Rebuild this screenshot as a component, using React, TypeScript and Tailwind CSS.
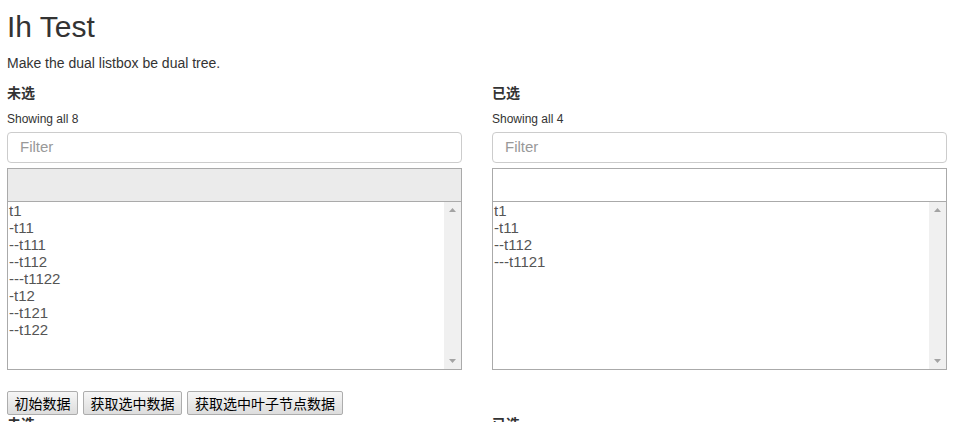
import React from "react";

const leftItems = ["t1", "-t11", "--t111", "--t112", "---t1122", "-t12", "--t121", "--t122"];
const rightItems = ["t1", "-t11", "--t112", "---t1121"];

function ScrollBar() {
  return (
    <div className="w-[17px] shrink-0 bg-[#f0f0f0] flex flex-col justify-between items-center py-[6px]">
      <svg width="7" height="4" viewBox="0 0 7 4">
        <path d="M0 4 L3.5 0 L7 4 Z" fill="#a3a3a3" />
      </svg>
      <svg width="7" height="4" viewBox="0 0 7 4">
        <path d="M0 0 L3.5 4 L7 0 Z" fill="#a3a3a3" />
      </svg>
    </div>
  );
}

function ListBox({
  title,
  count,
  items,
  gray,
}: {
  title: string;
  count: number;
  items: string[];
  gray: boolean;
}) {
  return (
    <div className="flex flex-col">
      <label className="block text-[14px] leading-[20px] font-bold text-[#333] mt-[10px]">{title}</label>
      <span className="block text-[12px] leading-[17px] text-[#333] mt-[8px]">Showing all {count}</span>
      <div className="mt-[4px] h-[31px] border border-[#ccc] rounded-[4px] flex items-center px-[12px] text-[15px] text-[#999]">
        Filter
      </div>
      <div
        className={
          gray
            ? "mt-[5px] h-[33px] border border-b-0 border-[#aaa] bg-[#ebebeb]"
            : "mt-[5px] h-[33px] border border-b-0 border-[#aaa] bg-white"
        }
      />
      <div className="h-[169px] border border-[#aaa] flex">
        <div className="flex-1 text-[15px] leading-[17px] text-[#555]">
          {items.map((it, i) => (
            <div key={i} className="pl-[1px]">
              {it}
            </div>
          ))}
        </div>
        <ScrollBar />
      </div>
    </div>
  );
}

function Btn({ children, w }: { children: React.ReactNode; w: string }) {
  return (
    <button
      className={
        "h-[24px] border border-[#adadad] rounded-[2px] bg-gradient-to-b from-[#f6f6f6] to-[#dddddd] text-[14px] text-black leading-none " +
        w
      }
    >
      {children}
    </button>
  );
}

export default function App() {
  return (
    <div
      className="pl-[7px] pr-[9px] bg-white min-h-[422px] overflow-hidden"
      style={{ fontFamily: '"Liberation Sans", Arial, "Noto Sans CJK SC", sans-serif' }}
    >
      <h1 className="text-[30px] leading-[33px] text-[#333] mt-[10px]">Ih Test</h1>
      <p className="text-[14px] leading-[20px] text-[#333] mt-[10px]">Make the dual listbox be dual tree.</p>
      <div className="grid grid-cols-2 gap-[30px]">
        <ListBox title="未选" count={8} items={leftItems} gray={true} />
        <ListBox title="已选" count={4} items={rightItems} gray={false} />
      </div>
      <div className="flex gap-[5px] mt-[21px]" style={{ fontFamily: '"Noto Sans CJK SC", sans-serif' }}>
        <Btn w="w-[71px]">初始数据</Btn>
        <Btn w="w-[99px]">获取选中数据</Btn>
        <Btn w="w-[156px]">获取选中叶子节点数据</Btn>
      </div>
      <div className="grid grid-cols-2 gap-[30px]">
        <label className="block text-[14px] leading-[20px] font-bold text-[#333] mt-[-1px]">未选</label>
        <label className="block text-[14px] leading-[20px] font-bold text-[#333] mt-[-1px]">已选</label>
      </div>
    </div>
  );
}
